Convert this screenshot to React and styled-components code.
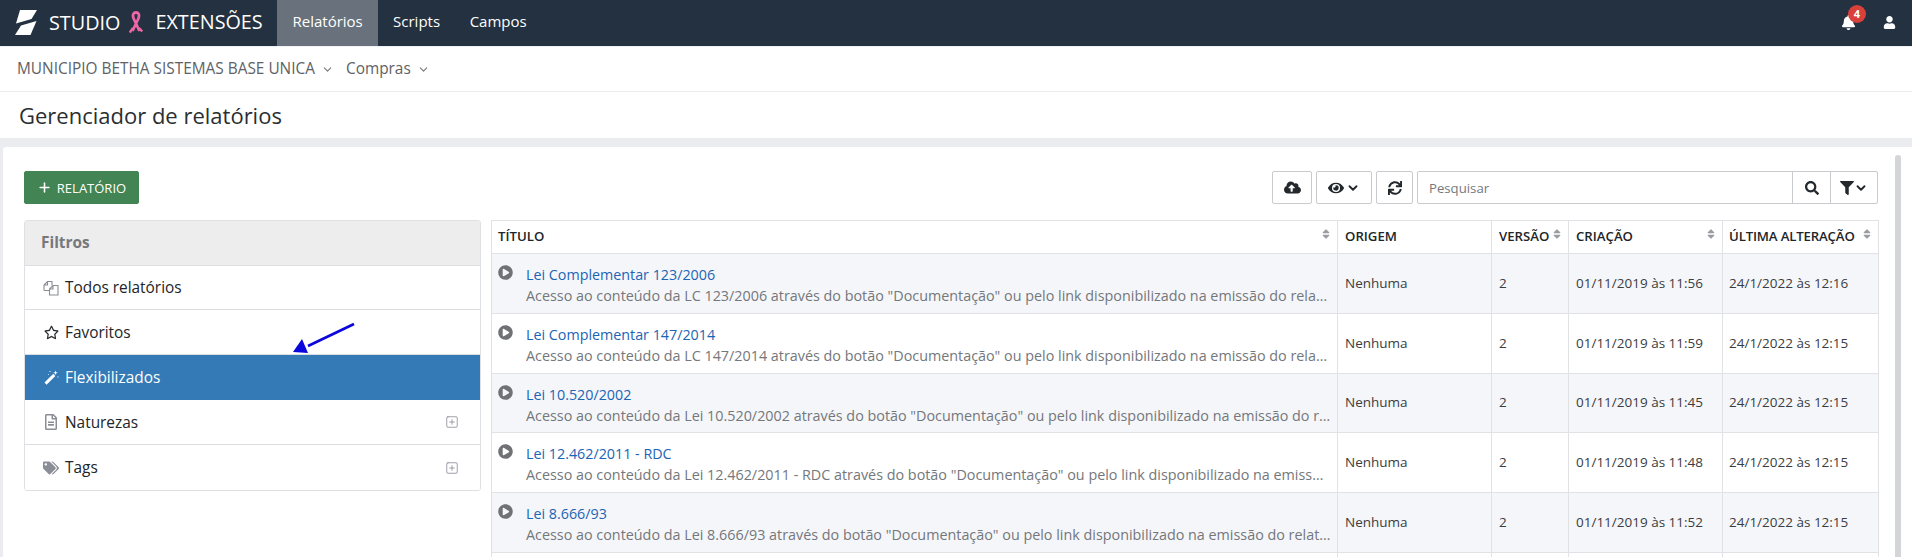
import React from "react";
import styled, { createGlobalStyle } from "styled-components";
import {
  FaCloudUploadAlt, FaEye, FaSync, FaSearch, FaFilter, FaBell, FaUser, FaPlayCircle,
  FaRegStar, FaTags, FaRegFileAlt, FaSort,
} from "react-icons/fa";
import { FiChevronDown, FiPlus } from "react-icons/fi";
import { SquarePlus } from "lucide-react";

const Global = createGlobalStyle`
  html, body { margin: 0; padding: 0; height: 557px; overflow: hidden; background: #ebecf0; }
  * { box-sizing: border-box; }
  body { font-family: "Open Sans", "Noto Sans", sans-serif; color: #212529; }
`;

const Page = styled.div`
  width: 1912px;
  height: 557px;
  overflow: hidden;
  display: flex;
  flex-direction: column;
`;

const TopBar = styled.header`
  height: 46px;
  flex: none;
  background: #233140;
  display: flex;
  align-items: stretch;
  color: #fff;
`;
const Brand = styled.div`
  width: 277px;
  display: flex;
  align-items: center;
  padding: 0 0 2px 15px;
  font-size: 19.8px;
`;
const BrandText = styled.span`
  margin-left: ${(p) => p.$ml}px;
  position: relative;
  top: ${(p) => p.$top || 0}px;
`;
const NavItem = styled.div`
  display: flex;
  align-items: center;
  padding: 0 ${(p) => (p.$active ? 15.5 : 14.8)}px 5px;
  font-size: 15px;
  background: ${(p) => (p.$active ? "#68717c" : "transparent")};
`;
const TopRight = styled.div`
  margin-left: auto;
  display: flex;
  align-items: center;
  padding: 0 16px 3px 0;
  gap: 27px;
`;
const BellWrap = styled.div`
  position: relative;
  display: flex;
  font-size: 15px;
  margin-top: 1px;
`;
const Badge = styled.span`
  position: absolute;
  top: -10px;
  left: 7px;
  width: 18px;
  height: 18px;
  border-radius: 50%;
  background: #d9403a;
  font-size: 11px;
  font-weight: 700;
  line-height: 18px;
  text-align: center;
`;
const UserIcon = styled.div`
  display: flex;
  font-size: 13px;
  margin-top: 1px;
`;

const Crumbs = styled.div`
  height: 46px;
  flex: none;
  background: #fff;
  border-top: 1px solid #f0f1f3;
  border-bottom: 1px solid #ebecef;
  display: flex;
  align-items: center;
  padding: 0 0 2px 17px;
  font-size: 15.4px;
  color: #5e6266;
`;
const Crumb = styled.span`
  display: flex;
  align-items: center;
  gap: 6px;
  margin-right: 12px;
  svg { font-size: 13px; color: #777; margin-top: 3px; }
`;
const TitleBar = styled.div`
  height: 46px;
  flex: none;
  background: #fff;
  display: flex;
  align-items: center;
  padding-left: 19px;
  font-size: 22px;
  color: #2b2e31;
`;
const Card = styled.main`
  position: relative;
  flex: 1;
  margin: 9px 0 0 3px;
  background: #fff;
  padding: 24px 34px 0 21px;
  border-radius: 3px 0 0 0;
  min-height: 0;
  overflow: hidden;
`;
const ScrollThumb = styled.div`
  position: absolute;
  right: 11px;
  top: 8px;
  bottom: 0;
  width: 6px;
  background: #d4d5d8;
  border-radius: 3px 3px 0 0;
`;
const Toolbar = styled.div`
  display: flex;
  align-items: center;
  height: 33px;
  margin-bottom: 16px;
`;
const AddButton = styled.button`
  width: 115px;
  height: 33px;
  border: 1px solid #428453;
  border-radius: 2px;
  background: #428453;
  color: #fff;
  font: 13px "Open Sans", sans-serif;
  display: flex;
  align-items: center;
  justify-content: center;
  gap: 5px;
  padding: 0;
  svg { font-size: 15px; stroke-width: 2.5; }
`;
const ToolRight = styled.div`
  margin-left: auto;
  display: flex;
  gap: 4px;
  height: 33px;
`;
const ToolButton = styled.div`
  width: ${(p) => p.$w}px;
  height: 33px;
  border: 1px solid #c9cbcf;
  border-radius: 2px;
  background: #fff;
  color: #23282d;
  display: flex;
  align-items: center;
  justify-content: center;
  font-size: 13px;
  gap: 2px;
  svg.chev { font-size: 14px; stroke-width: 3.2; }
`;
const SearchGroup = styled.div`
  width: 461px;
  height: 33px;
  display: flex;
  border: 1px solid #c9cbcf;
  border-radius: 2px;
`;
const SearchInput = styled.input`
  flex: 1;
  min-width: 0;
  border: 0;
  outline: 0;
  background: transparent;
  padding: 0 11px;
  font: 13.2px "Open Sans", sans-serif;
  &::placeholder { color: #75797e; opacity: 1; }
`;
const SearchAddon = styled.div`
  width: ${(p) => p.$w}px;
  border-left: 1px solid #c9cbcf;
  display: flex;
  align-items: center;
  justify-content: center;
  font-size: 14px;
  color: #23282d;
  gap: 0;
  svg.chev { font-size: 14px; stroke-width: 3.2; }
`;

const Columns = styled.div`
  display: grid;
  grid-template-columns: 457px 1387px;
  gap: 10px;
  align-items: start;
`;
const Panel = styled.aside`
  border: 1px solid #dfe0e4;
  border-radius: 3px;
  overflow: hidden;
`;
const PanelHead = styled.div`
  height: 44.6px;
  background: #ededee;
  border-bottom: 1px solid #dcdde0;
  display: flex;
  align-items: center;
  padding: 0 0 0 16px;
  font-size: 15.4px;
  font-weight: 700;
  color: #76787b;
`;
const PanelRow = styled.div`
  height: 44.8px;
  display: flex;
  align-items: center;
  padding: 1px 21px 0 18px;
  font-size: 15.4px;
  color: ${(p) => (p.$active ? "#fff" : "#212529")};
  background: ${(p) => (p.$active ? "#337ab7" : "#fff")};
  border-bottom: ${(p) => (p.$last ? "0" : `1px solid ${p.$active ? "#337ab7" : "#dcdde0"}`)};
`;
const RowIcon = styled.span`
  width: 16px;
  margin-right: 6px;
  display: flex;
  justify-content: center;
  font-size: ${(p) => p.$size}px;
  color: ${(p) => (p.$active ? "#fff" : p.$dark ? "#2a2d31" : "#8a8d96")};
`;
const Expand = styled.span`
  margin-left: auto;
  display: flex;
  color: #8a8d96;
`;

const Table = styled.table`
  width: 1387px;
  table-layout: fixed;
  border-collapse: collapse;
  font-size: 14px;
`;
const HeadCell = styled.th`
  height: 33px;
  border: 1px solid #e1e2e6;
  padding: 0 6px 2px ${(p) => (p.$first || p.$final ? 6 : 7)}px;
  font-size: 13.2px;
  font-weight: 600;
  text-align: left;
  color: #212529;
  position: relative;
  white-space: nowrap;
  letter-spacing: ${(p) => p.$ls || 0}px;
`;
const SortIcon = styled.span`
  position: absolute;
  right: 5px;
  top: 7px;
  display: flex;
  font-size: 12px;
  color: #9a9da2;
`;
const BodyRow = styled.tr`
  background: ${(p) => (p.$odd ? "#f5f6fa" : "#fff")};
`;
const Cell = styled.td`
  border: 1px solid #e1e2e6;
  padding: 0 6px 1px ${(p) => (p.$final ? 6 : 7)}px;
  font-size: 13.5px;
  color: #3a3d41;
  white-space: nowrap;
`;
const TitleCell = styled.td`
  border: 1px solid #e1e2e6;
  padding: 0;
`;
const TitleWrap = styled.div`
  display: flex;
  height: 58.75px;
  padding: 10px 6px 0 6px;
`;
const Play = styled.span`
  flex: none;
  width: 28px;
  display: flex;
  font-size: 15px;
  color: #6f7175;
  margin-top: 1px;
`;
const TitleText = styled.div`
  flex: 1;
  min-width: 0;
  line-height: 21px;
`;
const LinkTitle = styled.div`
  font-size: 14.3px;
  color: #1c64b4;
`;
const Desc = styled.div`
  font-size: 14.35px;
  color: #74777b;
  white-space: nowrap;
  overflow: hidden;
  text-overflow: ellipsis;
`;
const Arrow = styled.svg`
  position: absolute;
  left: 285px;
  top: 169px;
  width: 80px;
  height: 50px;
`;

const Logo = () => (
  <svg width="22" height="25" viewBox="0 0 22 25" fill="#fff">
    <path d="M5 0 H22 L16.5 9 L1 13.5 Z" />
    <path d="M6 15.5 L21.5 11 L15.5 25 H0 Z" />
  </svg>
);
const Ribbon = () => (
  <svg width="14" height="23" viewBox="0 0 14 23" style={{ marginLeft: 9 }} fill="none" stroke="#ee66a6" strokeWidth="2.8">
    <path d="M4.6 7.5 C3 3.5 4.5 1.5 7 1.5 C9.5 1.5 11 3.5 9.4 7.5 L3.5 20 M4.6 7.5 L10.5 20" />
    <path d="M0.8 21.5 L4 17 M13.2 20.5 L10 17" strokeWidth="2.4" />
  </svg>
);
const PagesIcon = () => (
  <svg width="16" height="16" viewBox="0 0 16 16" fill="none" stroke="currentColor" strokeWidth="1.1">
    <path d="M1 10.5 V5 L4.5 1.5 H9 V5.5 M4.5 1.5 V5 H1 M1 10.5 H6.5" />
    <path d="M6.5 15 V9 L10 5.5 H15 V15 Z M10 5.5 V9 H6.5" />
  </svg>
);
const WandIcon = () => (
  <svg width="15" height="15" viewBox="0 0 15 15" fill="currentColor">
    <path d="M0.5 12.6 L9.3 3.8 L11.4 5.9 L2.6 14.7 Z" />
    <path d="M11.5 0.5 l.6 1.7 1.7.6-1.7.6-.6 1.7-.6-1.7-1.7-.6 1.7-.6z" />
    <path d="M5.5 1 h1 v1 h-1z M13.5 6.5 h1 v1 h-1z M4 4 h.8 v.8 h-.8z" />
  </svg>
);

const Chevron = () => <FiChevronDown className="chev" />;

const rows = [
  ["Lei Complementar 123/2006", 'Acesso ao conteúdo da LC 123/2006 através do botão "Documentação" ou pelo link disponibilizado na emissão do relatório no sistema', "01/11/2019 às 11:56", "24/1/2022 às 12:16"],
  ["Lei Complementar 147/2014", 'Acesso ao conteúdo da LC 147/2014 através do botão "Documentação" ou pelo link disponibilizado na emissão do relatório no sistema', "01/11/2019 às 11:59", "24/1/2022 às 12:15"],
  ["Lei 10.520/2002", 'Acesso ao conteúdo da Lei 10.520/2002 através do botão "Documentação" ou pelo link disponibilizado na emissão do relatório no sistema', "01/11/2019 às 11:45", "24/1/2022 às 12:15"],
  ["Lei 12.462/2011 - RDC", 'Acesso ao conteúdo da Lei 12.462/2011 - RDC através do botão "Documentação" ou pelo link disponibilizado na emissão do relatório', "01/11/2019 às 11:48", "24/1/2022 às 12:15"],
  ["Lei 8.666/93", 'Acesso ao conteúdo da Lei 8.666/93 através do botão "Documentação" ou pelo link disponibilizado na emissão do relatório no sistema', "01/11/2019 às 11:52", "24/1/2022 às 12:15"],
];

const filters = [
  { icon: <PagesIcon />, label: "Todos relatórios", size: 16 },
  { icon: <FaRegStar />, label: "Favoritos", dark: true, size: 15 },
  { icon: <WandIcon />, label: "Flexibilizados", active: true, size: 15 },
  { icon: <FaRegFileAlt />, label: "Naturezas", expand: true, size: 16 },
  { icon: <FaTags />, label: "Tags", expand: true, last: true, size: 16 },
];

const heads = [
  { label: "TÍTULO", w: 846, sort: true, first: true },
  { label: "ORIGEM", w: 154 },
  { label: "VERSÃO", w: 77, sort: true },
  { label: "CRIAÇÃO", w: 154, sort: true },
  { label: "ÚLTIMA ALTERAÇÃO", w: 156, sort: true, ls: -0.15, final: true },
];

export default function App() {
  return (
    <Page>
      <Global />
      <TopBar>
        <Brand>
          <Logo />
          <BrandText $ml={12}>STUDIO</BrandText>
          <Ribbon />
          <BrandText $ml={12} $top={-1}>EXTENSÕES</BrandText>
        </Brand>
        <NavItem $active>Relatórios</NavItem>
        <NavItem>Scripts</NavItem>
        <NavItem>Campos</NavItem>
        <TopRight>
          <BellWrap>
            <FaBell />
            <Badge>4</Badge>
          </BellWrap>
          <UserIcon><FaUser /></UserIcon>
        </TopRight>
      </TopBar>
      <Crumbs>
        <Crumb>MUNICIPIO BETHA SISTEMAS BASE UNICA <FiChevronDown /></Crumb>
        <Crumb>Compras <FiChevronDown /></Crumb>
      </Crumbs>
      <TitleBar>Gerenciador de relatórios</TitleBar>
      <Card>
        <ScrollThumb />
        <Toolbar>
          <AddButton><FiPlus /> RELATÓRIO</AddButton>
          <ToolRight>
            <ToolButton $w={40}><FaCloudUploadAlt size={17} /></ToolButton>
            <ToolButton $w={56}><FaEye size={16} /><Chevron /></ToolButton>
            <ToolButton $w={37}><FaSync size={14} /></ToolButton>
            <SearchGroup>
              <SearchInput placeholder="Pesquisar" />
              <SearchAddon $w={38}><FaSearch /></SearchAddon>
              <SearchAddon $w={47}><FaFilter /><Chevron /></SearchAddon>
            </SearchGroup>
          </ToolRight>
        </Toolbar>
        <Columns>
          <Panel>
            <PanelHead>Filtros</PanelHead>
            {filters.map((f) => (
              <PanelRow key={f.label} $active={f.active} $last={f.last}>
                <RowIcon $active={f.active} $dark={f.dark} $size={f.size}>{f.icon}</RowIcon>
                {f.label}
                {f.expand && <Expand><SquarePlus size={14} strokeWidth={1.4} /></Expand>}
              </PanelRow>
            ))}
          </Panel>
          <Table>
            <colgroup>
              {heads.map((h) => <col key={h.label} style={{ width: h.w }} />)}
            </colgroup>
            <thead>
              <tr>
                {heads.map((h) => (
                  <HeadCell key={h.label} $ls={h.ls} $first={h.first} $final={h.final}>
                    {h.label}
                    {h.sort && <SortIcon><FaSort /></SortIcon>}
                  </HeadCell>
                ))}
              </tr>
            </thead>
            <tbody>
              {rows.map((r, i) => (
                <BodyRow key={r[0]} $odd={i % 2 === 0}>
                  <TitleCell>
                    <TitleWrap>
                      <Play><FaPlayCircle /></Play>
                      <TitleText>
                        <LinkTitle>{r[0]}</LinkTitle>
                        <Desc>{r[1]}</Desc>
                      </TitleText>
                    </TitleWrap>
                  </TitleCell>
                  <Cell>Nenhuma</Cell>
                  <Cell>2</Cell>
                  <Cell>{r[2]}</Cell>
                  <Cell $final>{r[3]}</Cell>
                </BodyRow>
              ))}
              <BodyRow>
                <TitleCell><TitleWrap /></TitleCell>
                <Cell /><Cell /><Cell /><Cell $final />
              </BodyRow>
            </tbody>
          </Table>
        </Columns>
        <Arrow viewBox="0 0 80 50">
          <path d="M66 8 L20 30" stroke="#0a06dc" strokeWidth="2.6" fill="none" />
          <path d="M5 36 L14 23 L20 37 Z" fill="#0a06dc" />
        </Arrow>
      </Card>
    </Page>
  );
}
